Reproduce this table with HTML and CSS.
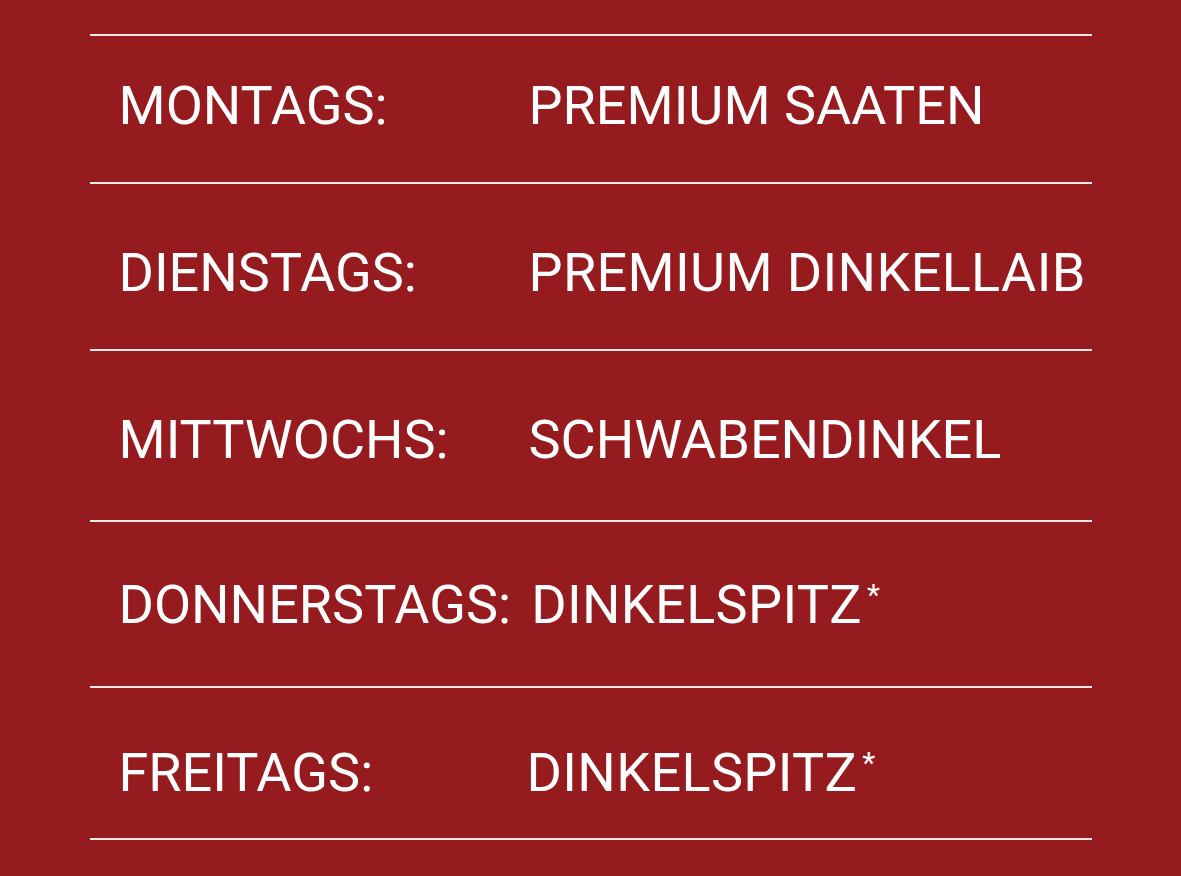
FILE: index.html
```html
<!DOCTYPE html>
<html lang="de">
<head>
<meta charset="utf-8">
<title>Wochenplan</title>
<link rel="stylesheet" href="styles.css">
</head>
<body>
<div class="schedule">
  <div class="row row--mo"><span class="day">MONTAGS:</span><span class="bread">PREMIUM SAATEN</span></div>
  <div class="row row--di"><span class="day">DIENSTAGS:</span><span class="bread bread--wide">PREMIUM DINKELLAIB</span></div>
  <div class="row row--mi"><span class="day">MITTWOCHS:</span><span class="bread">SCHWABENDINKEL</span></div>
  <div class="row row--do"><span class="day">DONNERSTAGS:</span><span class="bread bread--wide">DINKELSPITZ<sup class="star">*</sup></span></div>
  <div class="row row--fr"><span class="day">FREITAGS:</span><span class="bread bread--wide">DINKELSPITZ<sup class="star">*</sup></span></div>
</div>
</body>
</html>
```

FILE: styles.css
```css
html, body {
  margin: 0;
  padding: 0;
}
body {
  background: #961b1f;
  color: #ffffff;
  font-family: Roboto, "Liberation Sans", sans-serif;
  min-height: 876px;
}
.schedule {
  width: 1002px;
  margin: 0 auto;
  padding-top: 34px;
}
.schedule .row:first-child {
  border-top: 2px solid #f3e6e6;
}
.row {
  display: flex;
  align-items: baseline;
  border-bottom: 2px solid #f3e6e6;
  padding-left: 29px;
  font-size: 54px;
  line-height: 63px;
  white-space: nowrap;
}
.day {
  width: 410px;
  flex: none;
}
.row--do .day {
  width: auto;
  margin-right: 20px;
}
.row--fr .day {
  width: 408px;
}
.bread {
  flex: none;
}
.bread--wide {
  letter-spacing: 0.35px;
}
.star {
  font-size: 30px;
  line-height: 0;
  vertical-align: 18px;
  margin-left: 5px;
}
.row--mo { padding-top: 38px; padding-bottom: 45px; }
.row--di { padding-top: 57px; padding-bottom: 45px; }
.row--mi { padding-top: 57px; padding-bottom: 49px; }
.row--do { padding-top: 51px; padding-bottom: 50px; }
.row--fr { padding-top: 53px; padding-bottom: 34px; }
```
